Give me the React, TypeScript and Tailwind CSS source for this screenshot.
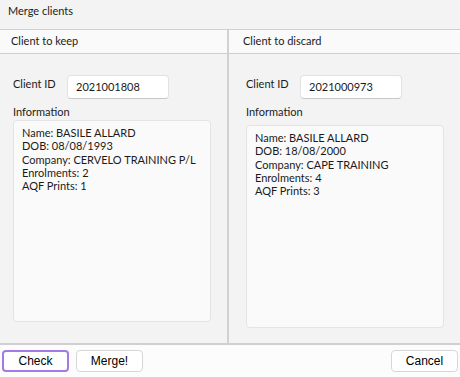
import React from "react";

function Panel({ title, id, lines, left, boxTop, boxH }: { title: string; id: string; lines: string[]; left: boolean; boxTop: string; boxH: string }) {
  return (
    <div className={left ? "w-[229px] flex flex-col border-r-2 border-[#d2d2d2]" : "flex-1 flex flex-col"}>
      <div className={"h-[24px] bg-[#fafafa] border-b border-[#d0d0d0] flex items-center " + (left ? "pl-[11px]" : "pl-[14px]")}>
        <span>{title}</span>
      </div>
      <div className={"flex-1 flex flex-col " + (left ? "pl-[13px] pr-[16px]" : "pl-[17px] pr-[16px]")}>
        <div className="flex items-start mt-[21px]">
          <div className="w-[54px] pt-[1px]">Client ID</div>
          <div className="w-[102px] h-[24px] bg-white rounded-[4px] border border-[#e2e2e2] border-b-[#c8c8c8] flex items-center pl-[8px] pt-[1px]">
            {id}
          </div>
        </div>
        <div className="mt-[6px] leading-[14px]">Information</div>
        <div className={"bg-[#fafafa] border border-[#e4e4e4] rounded-[4px] pl-[8px] leading-[13.3px] whitespace-nowrap " + boxTop + " " + boxH}>
          {lines.map((l, i) => (
            <div key={i}>{l}</div>
          ))}
        </div>
      </div>
    </div>
  );
}

export default function App() {
  return (
    <div
      className="w-[460px] h-[377px] bg-[#f3f3f3] flex flex-col text-[11px] text-[#1b1b1b] overflow-hidden"
      style={{ fontFamily: 'Lato, sans-serif' }}
    >
      <div className="h-[29px] pl-[8px] pt-[3px] text-[#222]">Merge clients</div>
      <div className="h-[316px] flex border-t border-b-2 border-[#d0d0d0]">
        <Panel
          left
          title="Client to keep"
          id="2021001808"
          boxTop="pt-[5px] mt-[1px]"
          boxH="h-[202px]"
          lines={["Name: BASILE ALLARD", "DOB: 08/08/1993", "Company: CERVELO TRAINING P/L", "Enrolments: 2", "AQF Prints: 1"]}
        />
        <Panel
          left={false}
          title="Client to discard"
          id="2021000973"
          boxTop="pt-[5px] mt-[6px]"
          boxH="h-[203px]"
          lines={["Name: BASILE ALLARD", "DOB: 18/08/2000", "Company: CAPE TRAINING", "Enrolments: 4", "AQF Prints: 3"]}
        />
      </div>
      <div className="flex-1 bg-[#fcfcfc] flex items-center px-[2px]" style={{ fontFamily: '"Liberation Sans", sans-serif' }}>
        <button className="w-[67px] h-[22px] bg-white rounded-[4px] border-2 border-[#a27be6] text-[12px] text-black">Check</button>
        <button className="ml-[7px] w-[67px] h-[22px] bg-white rounded-[4px] border border-[#d6d6d6] text-[12px] text-black">Merge!</button>
        <div className="flex-1" />
        <button className="w-[67px] h-[22px] bg-white rounded-[4px] border border-[#d6d6d6] text-[12px] text-black">Cancel</button>
      </div>
    </div>
  );
}
